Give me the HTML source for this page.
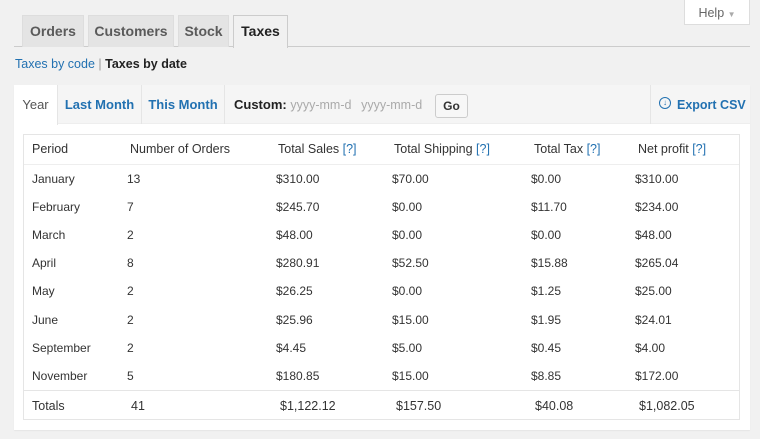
<!DOCTYPE html>
<html><head><meta charset="utf-8"><style>
*{box-sizing:border-box;margin:0;padding:0}
body{width:760px;height:439px;background:#f1f1f1;font-family:"Liberation Sans","DejaVu Sans",sans-serif;font-size:12.5px;color:#333;position:relative;overflow:hidden}
.a{position:absolute;white-space:nowrap}
.tab{position:absolute;top:15px;height:32px;background:#e4e4e4;border:1px solid #ddd;border-bottom:none;font-size:14px;font-weight:bold;color:#5a5a5a;text-align:center;line-height:31px}
.blue{color:#2271b1}
.row{position:absolute;left:0;width:100%;height:28px;line-height:28px}
.row span{position:absolute}
</style></head><body>
<div class="a" style="left:684px;top:0;width:66px;height:25px;background:#fff;border:1px solid #ddd;border-top:none;color:#666;font-size:12.5px;text-align:center;line-height:26px">Help <span style="font-size:8px;color:#aaa">▼</span></div>
<div class="a" style="left:14px;top:46px;width:736px;height:1px;background:#ccc"></div>
<div class="tab" style="left:22px;width:62px">Orders</div>
<div class="tab" style="left:88px;width:86px">Customers</div>
<div class="tab" style="left:178px;width:51px">Stock</div>
<div class="tab" style="left:233px;width:55px;background:#f1f1f1;color:#222;height:33px;border-color:#ccc">Taxes</div>
<div class="a" style="left:15px;top:57px;font-size:12.5px"><span class="blue">Taxes by code</span> <span style="color:#999">|</span> <b style="color:#222">Taxes by date</b></div>

<div class="a" style="left:14px;top:85px;width:736px;height:345px;background:#fff;box-shadow:0 1px 1px rgba(0,0,0,.05)"></div>
<div class="a" style="left:14px;top:85px;width:736px;height:39px;background:#f5f5f5;border-bottom:1px solid #eee"></div>
<div class="a" style="left:14px;top:85px;width:44px;height:40px;background:#fff;border-right:1px solid #e5e5e5;color:#555;font-size:13px;line-height:40px;text-align:center">Year</div>
<div class="a" style="left:58px;top:85px;width:84px;height:39px;border-right:1px solid #e5e5e5;font-size:13px;font-weight:bold;line-height:40px;text-align:center;color:#2271b1">Last Month</div>
<div class="a" style="left:142px;top:85px;width:83px;height:39px;border-right:1px solid #e5e5e5;font-size:13px;font-weight:bold;line-height:40px;text-align:center;color:#2271b1">This Month</div>
<div class="a" style="left:234px;top:85px;line-height:40px;font-size:13px;font-weight:bold;color:#222">Custom: <span style="font-weight:normal;color:#aaa;font-size:12.5px">yyyy-mm-d</span> <span style="font-weight:normal;color:#aaa;font-size:12.5px;margin-left:6px">yyyy-mm-d</span></div>
<div class="a" style="left:435px;top:94px;width:33px;height:24px;border:1px solid #ccc;border-radius:3px;background:#f7f7f7;font-size:12px;font-weight:bold;text-align:center;line-height:22px;color:#333">Go</div>
<div class="a" style="left:650px;top:85px;width:1px;height:39px;background:#e5e5e5"></div>
<div class="a" style="left:659px;top:97px;width:12px;height:12px;border:1px solid #2271b1;border-radius:50%;font-size:8px;line-height:10px;text-align:center;color:#2271b1">↓</div>
<div class="a" style="left:677px;top:85px;line-height:40px;font-size:12.5px;font-weight:bold;color:#2271b1">Export CSV</div>

<div class="a" style="left:23px;top:134px;width:717px;height:286px;border:1px solid #e5e5e5;font-size:12px">
 <div class="row" style="top:0;height:30px;line-height:29px;border-bottom:1px solid #eee;font-size:12.5px;color:#333"><span style="left:8px">Period</span><span style="left:106px">Number of Orders</span><span style="left:254px">Total Sales <span class="blue" style="position:static">[?]</span></span><span style="left:370px">Total Shipping <span class="blue" style="position:static">[?]</span></span><span style="left:510px">Total Tax <span class="blue" style="position:static">[?]</span></span><span style="left:614px">Net profit <span class="blue" style="position:static">[?]</span></span></div>
 <div class="row" style="top:30px"><span style="left:8px">January</span><span style="left:103px">13</span><span style="left:252px">$310.00</span><span style="left:368px">$70.00</span><span style="left:507px">$0.00</span><span style="left:611px">$310.00</span></div>
 <div class="row" style="top:58px"><span style="left:8px">February</span><span style="left:103px">7</span><span style="left:252px">$245.70</span><span style="left:368px">$0.00</span><span style="left:507px">$11.70</span><span style="left:611px">$234.00</span></div>
 <div class="row" style="top:86px"><span style="left:8px">March</span><span style="left:103px">2</span><span style="left:252px">$48.00</span><span style="left:368px">$0.00</span><span style="left:507px">$0.00</span><span style="left:611px">$48.00</span></div>
 <div class="row" style="top:114px"><span style="left:8px">April</span><span style="left:103px">8</span><span style="left:252px">$280.91</span><span style="left:368px">$52.50</span><span style="left:507px">$15.88</span><span style="left:611px">$265.04</span></div>
 <div class="row" style="top:142px"><span style="left:8px">May</span><span style="left:103px">2</span><span style="left:252px">$26.25</span><span style="left:368px">$0.00</span><span style="left:507px">$1.25</span><span style="left:611px">$25.00</span></div>
 <div class="row" style="top:171px"><span style="left:8px">June</span><span style="left:103px">2</span><span style="left:252px">$25.96</span><span style="left:368px">$15.00</span><span style="left:507px">$1.95</span><span style="left:611px">$24.01</span></div>
 <div class="row" style="top:199px"><span style="left:8px">September</span><span style="left:103px">2</span><span style="left:252px">$4.45</span><span style="left:368px">$5.00</span><span style="left:507px">$0.45</span><span style="left:611px">$4.00</span></div>
 <div class="row" style="top:227px"><span style="left:8px">November</span><span style="left:103px">5</span><span style="left:252px">$180.85</span><span style="left:368px">$15.00</span><span style="left:507px">$8.85</span><span style="left:611px">$172.00</span></div>
 <div class="row" style="top:255px;height:30px;line-height:30px;border-top:1px solid #e5e5e5;font-size:12.5px"><span style="left:8px">Totals</span><span style="left:107px">41</span><span style="left:256px">$1,122.12</span><span style="left:372px">$157.50</span><span style="left:511px">$40.08</span><span style="left:615px">$1,082.05</span></div>
</div>
</body></html>
